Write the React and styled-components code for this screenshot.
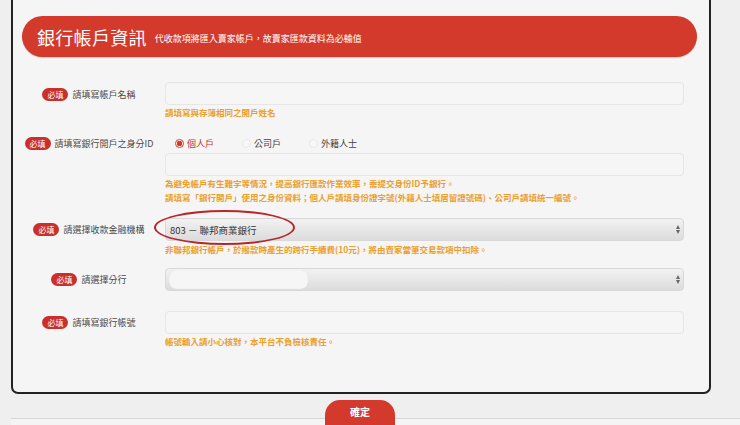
import React from 'react';
import styled, { createGlobalStyle } from 'styled-components';

const GlobalStyle = createGlobalStyle`
  body {
    margin: 0;
    background: #efefef;
    font-family: "Noto Sans CJK TC", "Liberation Sans", sans-serif;
    overflow: hidden;
  }
`;

const Page = styled.div`
  width: 740px;
  height: 425px;
  position: relative;
  padding-left: 11px;
  box-sizing: border-box;
`;

const Card = styled.div`
  width: 700px;
  height: 394px;
  box-sizing: border-box;
  background: #f5f5f5;
  border: 2px solid #222;
  border-top: none;
  border-radius: 0 0 7px 7px;
  padding: 16px 12px 0 9px;
`;

const Header = styled.div`
  height: 41px;
  background: #d33a2c;
  border-radius: 21px;
  display: flex;
  align-items: center;
  padding-left: 15px;
  box-shadow: 0 1px 1px rgba(0,0,0,0.15);
`;

const Title = styled.h1`
  margin: 0;
  color: #fff;
  font-size: 18px;
  font-weight: 400;
  letter-spacing: 0.3px;
`;

const Subtitle = styled.span`
  color: #fff;
  font-size: 9px;
  margin-left: 8px;
  margin-top: 3px;
`;

const Form = styled.div`
  display: flex;
  flex-direction: column;
`;

const Row = styled.div`
  display: grid;
  grid-template-columns: 143px 519px;
  margin-top: ${p => p.$top}px;
`;

const LabelCell = styled.div`
  display: flex;
  justify-content: center;
  align-items: center;
  height: ${p => p.$h || 23}px;
  margin-top: ${p => p.$off || 0}px;
  padding-right: 9px;
`;

const Badge = styled.span`
  background: #c9302c;
  color: #fff;
  font-size: 8px;
  border-radius: 7px;
  padding: 0 5px;
  height: 13px;
  line-height: 13px;
  margin-right: 4px;
`;

const LabelText = styled.span`
  color: #4a4a4a;
  font-size: 9px;
`;

const Field = styled.div`
  display: flex;
  flex-direction: column;
`;

const Input = styled.div`
  height: 23px;
  box-sizing: border-box;
  border: 1px solid #e6e6e6;
  border-radius: 4px;
  background: #f6f6f6;
`;

const Select = styled.div`
  height: 23px;
  box-sizing: border-box;
  border: 1px solid #d8d8d8;
  border-radius: 4px;
  background: linear-gradient(#f2f2f2, #dcdcdc);
  display: flex;
  align-items: center;
  padding: 0 4px;
  position: relative;
  font-size: 9.5px;
  color: #333;
`;

const Arrows = styled.span`
  position: absolute;
  right: 3px;
  top: 6px;
  display: flex;
  flex-direction: column;
  align-items: center;
  gap: 1px;
`;

const Tri = styled.span`
  width: 0;
  height: 0;
  border-left: 2px solid transparent;
  border-right: 2px solid transparent;
  ${p => (p.$up ? 'border-bottom: 4px solid #666;' : 'border-top: 4px solid #666;')}
`;

const WhitePill = styled.span`
  width: 139px;
  height: 19px;
  background: #f6f6f6;
  border-radius: 7px;
  box-shadow: inset 0 0 1px rgba(0,0,0,0.15);
  margin-left: -1px;
`;

const Help = styled.div`
  color: #eb9f2e;
  font-size: 8.5px;
  font-weight: 700;
  line-height: 14px;
  margin-top: ${p => p.$top || 0}px;
`;

const Radios = styled.div`
  display: flex;
  align-items: center;
  height: 19px;
  padding-left: 10px;
`;

const RadioItem = styled.label`
  display: flex;
  align-items: center;
  width: 67px;
  font-size: 9px;
  color: ${p => (p.$on ? '#c9302c' : '#444')};
`;

const Dot = styled.span`
  width: 9px;
  height: 9px;
  border-radius: 50%;
  box-sizing: border-box;
  margin-right: 3px;
  ${p =>
    p.$on
      ? 'border: 1.5px solid #d33a2c; background: radial-gradient(circle, #d33a2c 0 2.6px, #fff 3px);'
      : 'border: 1px solid #e9e9e9; background: #f7f7f7;'}
`;

const Ellipse = styled.span`
  position: absolute;
  left: -12px;
  top: -9px;
  width: 137px;
  height: 31px;
  border: 2px solid #b8262b;
  border-radius: 50%;
  pointer-events: none;
`;

const Footer = styled.div`
  margin-top: 24px;
  height: 7px;
  border-top: 1px solid #d6d6d6;
  background: #f4f4f4;
  position: relative;
`;

const Button = styled.button`
  position: absolute;
  left: 314px;
  top: -19px;
  width: 70px;
  height: 30px;
  border: none;
  border-radius: 15px 15px 0 0;
  background: #d33a2c;
  color: #fff;
  font-family: inherit;
  font-size: 10px;
  font-weight: 700;
  padding: 0 0 8px;
`;

const Required = ({ children }) => (
  <>
    <Badge>必填</Badge>
    <LabelText>{children}</LabelText>
  </>
);

const App = () => {
  return (
    <Page>
      <GlobalStyle />
      <Card>
        <Header>
          <Title>銀行帳戶資訊</Title>
          <Subtitle>代收款項將匯入賣家帳戶，故賣家匯款資料為必輸值</Subtitle>
        </Header>
        <Form>
          <Row $top={25}>
            <LabelCell $off={1}>
              <Required>請填寫帳戶名稱</Required>
            </LabelCell>
            <Field>
              <Input />
              <Help>請填寫與存簿相同之開戶姓名</Help>
            </Field>
          </Row>
          <Row $top={15}>
            <LabelCell $h={19}>
              <Required>請填寫銀行開戶之身分ID</Required>
            </LabelCell>
            <Field>
              <Radios>
                <RadioItem $on>
                  <Dot $on />個人戶
                </RadioItem>
                <RadioItem>
                  <Dot />公司戶
                </RadioItem>
                <RadioItem>
                  <Dot />外籍人士
                </RadioItem>
              </Radios>
              <Input />
              <Help>
                為避免帳戶有生難字等情況，提高銀行匯款作業效率，需提交身份ID予銀行。
                <br />
                請填寫「銀行開戶」使用之身份資料；個人戶請填身份證字號(外籍人士填居留證號碼)、公司戶請填統一編號。
              </Help>
            </Field>
          </Row>
          <Row $top={14}>
            <LabelCell $h={23}>
              <Required>請選擇收款金融機構</Required>
            </LabelCell>
            <Field>
              <Select>
                803 － 聯邦商業銀行
                <Ellipse />
                <Arrows>
                  <Tri $up />
                  <Tri />
                </Arrows>
              </Select>
              <Help $top={1}>
                非聯邦銀行帳戶，於撥款時產生的跨行手續費(10元)，將由賣家當筆交易款項中扣除。
              </Help>
            </Field>
          </Row>
          <Row $top={12}>
            <LabelCell $h={23}>
              <Required>請選擇分行</Required>
            </LabelCell>
            <Field>
              <Select>
                <WhitePill />
                <Arrows>
                  <Tri $up />
                  <Tri />
                </Arrows>
              </Select>
            </Field>
          </Row>
          <Row $top={20}>
            <LabelCell>
              <Required>請填寫銀行帳號</Required>
            </LabelCell>
            <Field>
              <Input />
              <Help>帳號輸入請小心核對，本平台不負檢核責任。</Help>
            </Field>
          </Row>
        </Form>
      </Card>
      <Footer>
        <Button>確定</Button>
      </Footer>
    </Page>
  );
};

export default App;
